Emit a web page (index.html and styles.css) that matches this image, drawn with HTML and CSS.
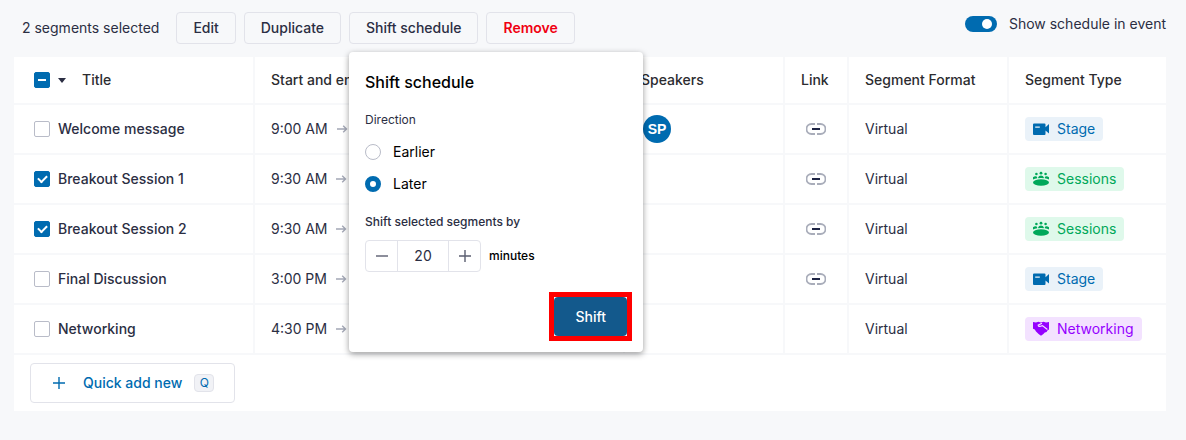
FILE: index.html
```
<!DOCTYPE html>
<html lang="en">
<head>
    <meta charset="UTF-8">
    <meta name="viewport" content="width=device-width, initial-scale=1.0">
    <title>Schedule</title>
    <link rel="stylesheet" href="styles.css">
</head>
<body>
    <!-- Icons -->
    <svg class="sprite" aria-hidden="true">
        <symbol id="icon-arrow" viewBox="0 0 12 10">
            <path d="M1 5h9.5M7.2 1.7L10.5 5L7.2 8.3" fill="none" stroke="#a3a7b5" stroke-width="1.4"/>
        </symbol>
        <symbol id="icon-link" viewBox="0 0 20 12">
            <path d="M9 1H5.5a5 5 0 0 0 0 10H9M11 1h3.5a5 5 0 0 1 0 10H11" fill="none" stroke="#a9adba" stroke-width="1.8"/>
            <path d="M6 6h8" stroke="#1d2445" stroke-width="2"/>
        </symbol>
        <symbol id="icon-stage" viewBox="0 0 16 16">
            <path fill="currentColor" fill-rule="evenodd" d="M1 2.5h10.5a1 1 0 0 1 1 1v2.8L16 3v9.6l-3.5-3v3.3a1 1 0 0 1-1 1H1a1 1 0 0 1-1-1v-9.4a1 1 0 0 1 1-1zM2.2 5.4v1.3h4.6V5.4z"/>
        </symbol>
        <symbol id="icon-sessions" viewBox="0 0 16 16">
            <g fill="currentColor">
                <ellipse cx="8" cy="11.5" rx="8" ry="3.3"/>
                <circle cx="8" cy="2.2" r="1.4"/>
                <circle cx="3.4" cy="3" r="1.3"/>
                <circle cx="12.6" cy="3" r="1.3"/>
                <path d="M5.2 7.2V6.2Q5.8 4.8 8 4.6Q10.2 4.8 10.8 6.2V7.2Q8 6.7 5.2 7.2z"/>
                <path d="M0 8V6.2Q1.2 5 3.2 5.2L4.2 6.2V7.3Q1.8 7.5 0 8.6z"/>
                <path d="M16 8V6.2Q14.8 5 12.8 5.2L11.8 6.2V7.3Q14.2 7.5 16 8.6z"/>
            </g>
        </symbol>
        <symbol id="icon-networking" viewBox="0 0 16 16">
            <path fill="currentColor" d="M0 1L3 1.6L5.4 0.8L7.8 1.6L10.6 0.8L13 1.6L16 1V8.6L14.4 9.4L13.6 11L11.8 11.6L10.4 13L8 14.8L5.6 13L3 10.4L1.8 8.6L0 7.8z"/>
            <path fill="none" stroke="#f3e2ff" stroke-width="1.2" d="M9 2.2L5.2 4.2Q5.4 6 7.6 5.2L9.4 4.6L14.4 8.4"/>
        </symbol>
        <symbol id="icon-plus" viewBox="0 0 16 16">
            <path d="M8 2v12M2 8h12" stroke="currentColor" stroke-width="1.4"/>
        </symbol>
        <symbol id="icon-minus" viewBox="0 0 16 16">
            <path d="M2 8h12" stroke="currentColor" stroke-width="1.4"/>
        </symbol>
    </svg>

    <div class="toolbar">
        <div class="bulk-actions">
            <span class="selected-count">2 segments selected</span>
            <button type="button" class="btn">Edit</button>
            <button type="button" class="btn">Duplicate</button>
            <div class="dropdown">
                <button type="button" class="btn" aria-expanded="true">Shift schedule</button>
                <form class="popover">
                    <h2>Shift schedule</h2>
                    <fieldset>
                        <legend>Direction</legend>
                        <label class="radio-row"><input type="radio" name="direction" value="earlier"> Earlier</label>
                        <label class="radio-row"><input type="radio" name="direction" value="later" checked> Later</label>
                    </fieldset>
                    <label class="field-label" for="shift-by">Shift selected segments by</label>
                    <div class="stepper-row">
                        <div class="stepper">
                            <button type="button" aria-label="Decrease"><svg><use href="#icon-minus"/></svg></button>
                            <input type="text" id="shift-by" inputmode="numeric" value="20">
                            <button type="button" aria-label="Increase"><svg><use href="#icon-plus"/></svg></button>
                        </div>
                        <span class="unit">minutes</span>
                    </div>
                    <div class="popover-footer">
                        <div class="highlight"><button type="button" class="btn-primary">Shift</button></div>
                    </div>
                </form>
            </div>
            <button type="button" class="btn danger">Remove</button>
        </div>
        <label class="toggle"><input type="checkbox" role="switch" checked> Show schedule in event</label>
    </div>

    <div class="schedule">
        <table>
            <colgroup>
                <col class="col-title">
                <col>
                <col class="col-speakers">
                <col class="col-link">
                <col class="col-format">
                <col class="col-type">
            </colgroup>
            <thead>
                <tr>
                    <th>
                        <div class="title-head">
                            <input type="checkbox" class="check partial" aria-label="Select all">
                            <span class="caret"></span>
                            <span>Title</span>
                        </div>
                    </th>
                    <th>Start and end</th>
                    <th>Speakers</th>
                    <th>Link</th>
                    <th>Segment Format</th>
                    <th>Segment Type</th>
                </tr>
            </thead>
            <tbody>
                <tr>
                    <td><label class="title"><input type="checkbox" class="check"> Welcome message</label></td>
                    <td><div class="time">9:00 AM <svg><use href="#icon-arrow"/></svg></div></td>
                    <td><span class="avatar">SP</span></td>
                    <td><a href="#" class="link" aria-label="Link"><svg><use href="#icon-link"/></svg></a></td>
                    <td>Virtual</td>
                    <td><span class="tag stage"><svg><use href="#icon-stage"/></svg>Stage</span></td>
                </tr>
                <tr>
                    <td><label class="title"><input type="checkbox" class="check" checked> Breakout Session 1</label></td>
                    <td><div class="time">9:30 AM <svg><use href="#icon-arrow"/></svg></div></td>
                    <td></td>
                    <td><a href="#" class="link" aria-label="Link"><svg><use href="#icon-link"/></svg></a></td>
                    <td>Virtual</td>
                    <td><span class="tag sessions"><svg><use href="#icon-sessions"/></svg>Sessions</span></td>
                </tr>
                <tr>
                    <td><label class="title"><input type="checkbox" class="check" checked> Breakout Session 2</label></td>
                    <td><div class="time">9:30 AM <svg><use href="#icon-arrow"/></svg></div></td>
                    <td></td>
                    <td><a href="#" class="link" aria-label="Link"><svg><use href="#icon-link"/></svg></a></td>
                    <td>Virtual</td>
                    <td><span class="tag sessions"><svg><use href="#icon-sessions"/></svg>Sessions</span></td>
                </tr>
                <tr>
                    <td><label class="title"><input type="checkbox" class="check"> Final Discussion</label></td>
                    <td><div class="time">3:00 PM <svg><use href="#icon-arrow"/></svg></div></td>
                    <td></td>
                    <td><a href="#" class="link" aria-label="Link"><svg><use href="#icon-link"/></svg></a></td>
                    <td>Virtual</td>
                    <td><span class="tag stage"><svg><use href="#icon-stage"/></svg>Stage</span></td>
                </tr>
                <tr>
                    <td><label class="title"><input type="checkbox" class="check"> Networking</label></td>
                    <td><div class="time">4:30 PM <svg><use href="#icon-arrow"/></svg></div></td>
                    <td></td>
                    <td></td>
                    <td>Virtual</td>
                    <td><span class="tag networking"><svg><use href="#icon-networking"/></svg>Networking</span></td>
                </tr>
            </tbody>
        </table>
        <div class="quick-add">
            <button type="button"><svg><use href="#icon-plus"/></svg>Quick add new<kbd>Q</kbd></button>
        </div>
    </div>
</body>
</html>
```

FILE: styles.css
```
* {
    box-sizing: border-box;
}

body {
    margin: 0;
    padding: 12px 20px 28px 14px;
    background-color: #f7f8fa;
    color: #2b2e43;
    font-family: Inter, sans-serif;
    font-size: 14px;
    line-height: 24px;
}

button, input {
    font: inherit;
    color: inherit;
    margin: 0;
}

button {
    cursor: pointer;
}

svg {
    display: block;
    width: 16px;
    height: 16px;
    flex: none;
}

.sprite {
    display: none;
}

/* Toolbar */
.toolbar {
    display: flex;
    justify-content: space-between;
    align-items: flex-start;
    padding-left: 8px;
    margin-bottom: 13px;
}

.bulk-actions {
    display: flex;
    align-items: center;
    gap: 8px;
}

.selected-count {
    margin-right: 9px;
}

.btn {
    display: block;
    height: 32px;
    padding: 0 16px;
    border: 1px solid #e2e3ea;
    border-radius: 4px;
    background: none;
    font-weight: 500;
    line-height: 24px;
}

.danger {
    color: #f00012;
    font-weight: 600;
}

.toggle {
    display: flex;
    align-items: center;
    gap: 12px;
}

.toggle input {
    appearance: none;
    width: 32px;
    height: 16px;
    padding: 3px;
    border-radius: 8px;
    background-color: #006bb0;
    display: flex;
    justify-content: flex-end;
}

.toggle input::after {
    content: "";
    width: 10px;
    height: 10px;
    margin-right: 2px;
    border-radius: 50%;
    background-color: #fff;
}

/* Shift schedule popover */
.dropdown {
    position: relative;
}

.popover {
    position: absolute;
    top: calc(100% + 8px);
    left: 0;
    z-index: 1;
    width: 294px;
    padding: 16px;
    border-radius: 4px;
    background-color: #fff;
    box-shadow: 0 2px 6px rgba(0, 0, 0, 0.4);
    color: #000;
}

.popover h2 {
    margin: 0 0 16px;
    font-size: 16px;
    font-weight: 500;
    line-height: 28px;
}

.popover fieldset {
    margin: 0 0 18px;
    padding: 0;
    border: 0;
}

.popover legend, .field-label {
    display: block;
    padding: 0;
    color: #2b2e43;
    font-size: 12px;
    line-height: 16px;
}

.popover legend {
    margin-bottom: 12px;
}

.field-label {
    margin-bottom: 10px;
    font-weight: 500;
}

.radio-row {
    display: flex;
    align-items: center;
    gap: 12px;
}

.radio-row + .radio-row {
    margin-top: 8px;
}

.radio-row input {
    appearance: none;
    width: 16px;
    height: 16px;
    border: 1px solid #b9bcc8;
    border-radius: 50%;
    background-color: #fff;
}

.radio-row input:checked {
    border: 5px solid #006bb0;
}

.stepper-row {
    display: flex;
    align-items: center;
    gap: 8px;
}

.stepper {
    display: flex;
    width: 116px;
    height: 32px;
    border: 1px solid #e2e3ea;
    border-radius: 4px;
    color: #2b2e43;
}

.stepper button {
    display: flex;
    align-items: center;
    justify-content: center;
    flex: none;
    width: 31px;
    padding: 0;
    border: 0;
    background: none;
    color: #5b5e70;
}

.stepper input {
    flex: 1;
    min-width: 0;
    padding: 0;
    border: 1px solid #e2e3ea;
    border-width: 0 1px;
    background: none;
    text-align: center;
}

.unit {
    font-size: 12px;
    font-weight: 500;
}

.popover-footer {
    display: flex;
    justify-content: flex-end;
    margin-top: 25px;
}

.highlight {
    outline: 5px solid #f00;
}

.btn-primary {
    display: block;
    height: 39px;
    padding: 0 21px;
    border: 0;
    border-radius: 4px;
    background-color: #13598c;
    color: #fff;
    font-weight: 500;
}

/* Table */
.schedule {
    background-color: #fff;
}

table {
    width: 100%;
    table-layout: fixed;
    border-collapse: separate;
    border-spacing: 0;
}

.col-title {
    width: 241px;
}

.col-speakers {
    width: 160px;
}

.col-link {
    width: 64px;
}

.col-format {
    width: 160px;
}

.col-type {
    width: 157px;
}

th, td {
    height: 50px;
    padding: 0 16px;
    border-right: 2px solid #f7f8fa;
    border-bottom: 2px solid #f7f8fa;
    text-align: left;
    font-weight: 400;
    white-space: nowrap;
}

th {
    height: 48px;
    color: #2c2c30;
    font-weight: 500;
}

th:first-child, td:first-child {
    padding-left: 20px;
}

th:last-child, td:last-child {
    border-right: 0;
}

.title-head, .title {
    display: flex;
    align-items: center;
    gap: 8px;
}

.title {
    font-weight: 500;
}

.caret {
    border: 4px solid transparent;
    border-top: 5px solid #2b2e43;
    border-bottom: 0;
    margin-right: 8px;
}

.check {
    appearance: none;
    display: flex;
    align-items: center;
    justify-content: center;
    flex: none;
    width: 16px;
    height: 16px;
    border: 1px solid #b9bcc8;
    border-radius: 2px;
    background-color: #fff;
}

.check:checked, .partial {
    border-color: #006bb0;
    background-color: #006bb0;
}

.check:checked::after {
    content: "";
    width: 7px;
    height: 4px;
    margin-bottom: 2px;
    border: 2px solid #fff;
    border-width: 0 0 2px 2px;
    transform: rotate(-45deg);
}

.partial::after {
    content: "";
    width: 8px;
    height: 2px;
    background-color: #fff;
}

.time {
    display: flex;
    align-items: center;
    gap: 8px;
}

.time svg {
    width: 12px;
    height: 10px;
}

.avatar {
    display: flex;
    align-items: center;
    justify-content: center;
    width: 28px;
    height: 28px;
    margin-left: 2px;
    border-radius: 50%;
    background-color: #006bb0;
    color: #fff;
    font-family: "Liberation Sans", Arial, sans-serif;
    font-weight: 700;
}

.link {
    display: flex;
    justify-content: center;
}

.link svg {
    width: 20px;
    height: 12px;
}

.tag {
    display: flex;
    align-items: center;
    gap: 8px;
    width: fit-content;
    padding: 0 8px;
    border-radius: 4px;
}

.stage {
    background-color: #eaf2f9;
    color: #006bb0;
}

.sessions {
    background-color: #dff9eb;
    color: #00a85a;
}

.networking {
    background-color: #f3e2ff;
    color: #9500ff;
}

.quick-add {
    padding: 8px 16px;
}

.quick-add button {
    display: flex;
    align-items: center;
    height: 40px;
    padding: 0 20px;
    border: 1px solid #e2e3ea;
    border-radius: 4px;
    background: none;
    color: #006bb0;
    font-weight: 500;
}

.quick-add svg {
    margin-right: 16px;
}

.quick-add kbd {
    width: 20px;
    height: 18px;
    margin-left: 12px;
    border: 1px solid #e2e3ea;
    border-radius: 4px;
    background-color: #f1f2f6;
    font-family: inherit;
    font-size: 12px;
    font-weight: 400;
    line-height: 16px;
    text-align: center;
}
```
